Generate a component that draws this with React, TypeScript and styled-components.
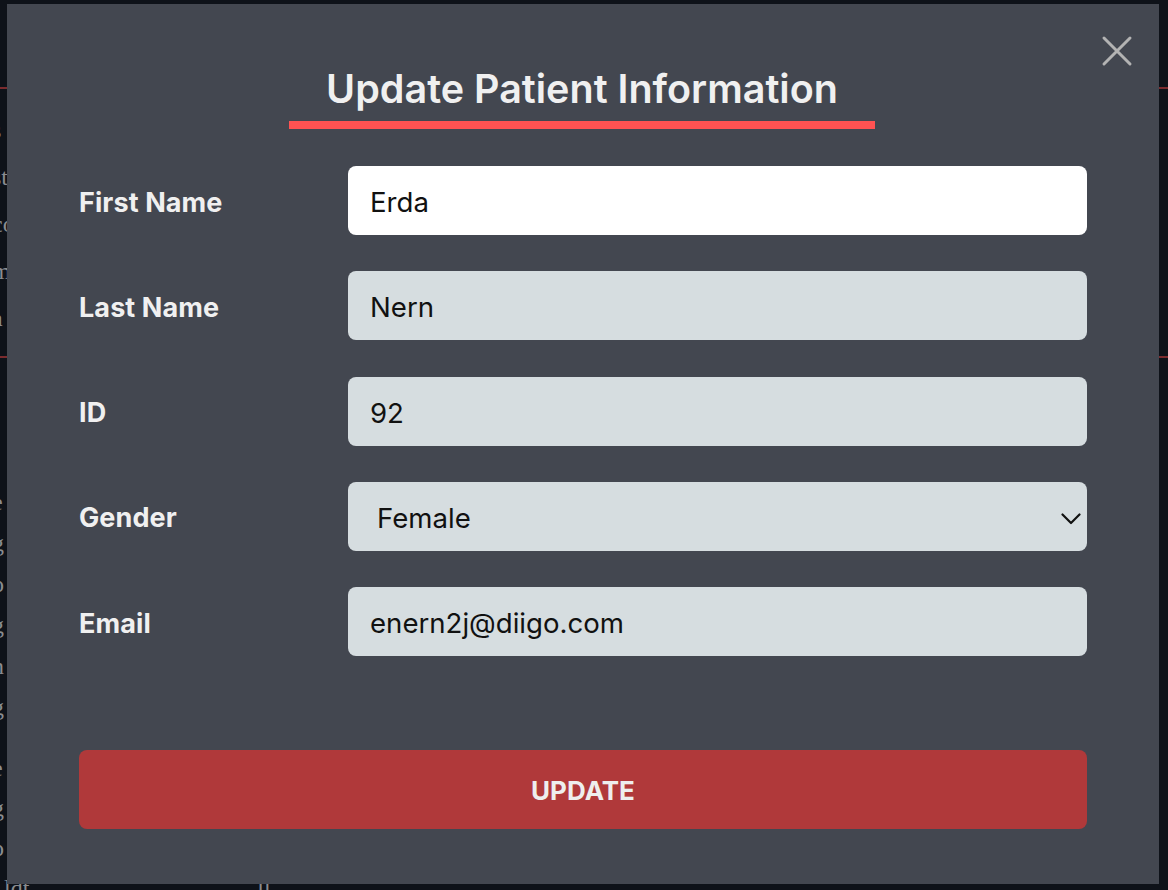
import React from "react";
import styled, { createGlobalStyle } from "styled-components";

const GlobalStyle = createGlobalStyle`
  html, body { margin: 0; padding: 0; background: #0e1219; }
  body { width: 1168px; height: 890px; overflow: hidden; }
  * { box-sizing: border-box; }
`;

const Page = styled.div`
  width: 1168px;
  height: 890px;
  overflow: hidden;
  background: #0e1219;
  font-family: "Liberation Serif", serif;
  color: #8a8c90;
`;

const PageHeader = styled.div`
  height: 89px;
  border-bottom: 2px solid #7b2b2e;
`;

const TopBlock = styled.div`
  padding: 18px 0 14px;
  border-bottom: 2px solid #7b2b2e;
`;

const BgLine = styled.div<{ $lh: number }>`
  font-size: 24px;
  line-height: ${(p) => p.$lh}px;
  margin-left: -8px;
  white-space: nowrap;
`;

const BgHeading = styled.div`
  font-size: 30px;
  font-weight: 700;
  line-height: 40px;
  margin: 48px 0 36px -12px;
  color: #9a9ca0;
`;

const Spacer = styled.div`
  height: 20px;
`;

const Overlay = styled.div`
  position: fixed;
  inset: 0;
`;

const Modal = styled.div`
  position: absolute;
  left: 7px;
  top: 4px;
  width: 1152px;
  height: 880px;
  background: #434750;
  padding: 62px 72px 0;
  display: flex;
  flex-direction: column;
  font-family: Inter, "Noto Sans", sans-serif;
`;

const CloseButton = styled.button`
  position: absolute;
  top: 27px;
  right: 22px;
  width: 40px;
  height: 40px;
  padding: 0;
  border: none;
  background: transparent;
  display: flex;
  align-items: center;
  justify-content: center;
  cursor: pointer;
`;

const TitleWrap = styled.div`
  display: flex;
  justify-content: center;
`;

const Title = styled.h2`
  margin: 0;
  padding: 0 37px 9px;
  border-bottom: 8px solid #ff5252;
  font-size: 39.5px;
  line-height: 46px;
  font-weight: 600;
  color: #f0f0f0;
  transform: translateX(-1px);
`;

const Form = styled.form`
  margin-top: 37px;
  display: flex;
  flex-direction: column;
  gap: 36.3px;
`;

const Row = styled.div`
  display: grid;
  grid-template-columns: 269px 739px;
  align-items: center;
`;

const Label = styled.label`
  font-size: 27px;
  font-weight: 700;
  color: #f0f0f0;
  letter-spacing: 0.1px;
  padding-top: 3px;
`;

const Field = styled.input<{ $active?: boolean }>`
  height: 69px;
  width: 100%;
  border: none;
  border-radius: 8px;
  background: ${(p) => (p.$active ? "#ffffff" : "#d6dde0")};
  padding: 3px 22px 0;
  font-family: Inter, "Noto Sans", sans-serif;
  font-size: 27.6px;
  color: #111;
  outline: none;
`;

const SelectWrap = styled.div`
  position: relative;
  height: 69px;
`;

const Select = styled.select`
  appearance: none;
  -webkit-appearance: none;
  height: 69px;
  width: 100%;
  border: none;
  border-radius: 8px;
  background: #d6dde0;
  padding: 3px 29px 0;
  font-family: Inter, "Noto Sans", sans-serif;
  font-size: 27.6px;
  color: #111;
  outline: none;
`;

const Chevron = styled.svg`
  position: absolute;
  right: 6px;
  top: 31px;
  pointer-events: none;
`;

const SubmitButton = styled.button`
  margin-top: 94px;
  height: 79px;
  width: 1008px;
  flex-shrink: 0;
  border: none;
  border-radius: 8px;
  background: #b0393a;
  color: #eeeeee;
  font-family: Inter, "Noto Sans", sans-serif;
  font-size: 26px;
  font-weight: 700;
  padding-top: 2px;
  cursor: pointer;
`;

const topLines = ["s", "st", "co", "m", "a"];
const lowerLines = ["e", "g", "o", "g", "n", "g"];
const lowerLines2 = ["e", "g", "o"];

export default function App() {
  return (
    <>
      <GlobalStyle />
      <Page>
        <PageHeader />
        <TopBlock>
          {topLines.map((t, i) => (
            <BgLine key={i} $lh={47}>
              {t}
            </BgLine>
          ))}
        </TopBlock>
        <BgHeading>s</BgHeading>
        {lowerLines.map((t, i) => (
          <BgLine key={i} $lh={41}>
            {t}
          </BgLine>
        ))}
        <Spacer />
        {lowerLines2.map((t, i) => (
          <BgLine key={"b" + i} $lh={40}>
            {t}
          </BgLine>
        ))}
        <BgLine $lh={40}>
          &nbsp;&nbsp;ldt&nbsp;&nbsp;&nbsp;&nbsp;&nbsp;&nbsp;&nbsp;&nbsp;&nbsp;&nbsp;&nbsp;&nbsp;&nbsp;&nbsp;&nbsp;&nbsp;&nbsp;&nbsp;&nbsp;&nbsp;&nbsp;&nbsp;&nbsp;&nbsp;&nbsp;&nbsp;&nbsp;&nbsp;&nbsp;&nbsp;&nbsp;&nbsp;&nbsp;&nbsp;&nbsp;&nbsp;&nbsp;&nbsp;ll
        </BgLine>
      </Page>
      <Overlay>
        <Modal>
          <CloseButton aria-label="Close">
            <svg width="32" height="32" viewBox="0 0 32 32">
              <path
                d="M3 3 L29 29 M29 3 L3 29"
                stroke="#b3b3b3"
                strokeWidth="3"
                strokeLinecap="round"
                fill="none"
              />
            </svg>
          </CloseButton>
          <TitleWrap>
            <Title>Update Patient Information</Title>
          </TitleWrap>
          <Form onSubmit={(e) => e.preventDefault()}>
            <Row>
              <Label>First Name</Label>
              <Field $active defaultValue="Erda" />
            </Row>
            <Row>
              <Label>Last Name</Label>
              <Field defaultValue="Nern" />
            </Row>
            <Row>
              <Label>ID</Label>
              <Field defaultValue="92" />
            </Row>
            <Row>
              <Label>Gender</Label>
              <SelectWrap>
                <Select defaultValue="Female">
                  <option>Male</option>
                  <option>Female</option>
                  <option>Other</option>
                </Select>
                <Chevron width="20" height="12" viewBox="0 0 20 12">
                  <path
                    d="M1.5 1.5 L10 10 L18.5 1.5"
                    stroke="#111"
                    strokeWidth="2.2"
                    fill="none"
                    strokeLinecap="round"
                    strokeLinejoin="round"
                  />
                </Chevron>
              </SelectWrap>
            </Row>
            <Row>
              <Label>Email</Label>
              <Field defaultValue="enern2j@diigo.com" />
            </Row>
          </Form>
          <SubmitButton type="button">UPDATE</SubmitButton>
        </Modal>
      </Overlay>
    </>
  );
}
